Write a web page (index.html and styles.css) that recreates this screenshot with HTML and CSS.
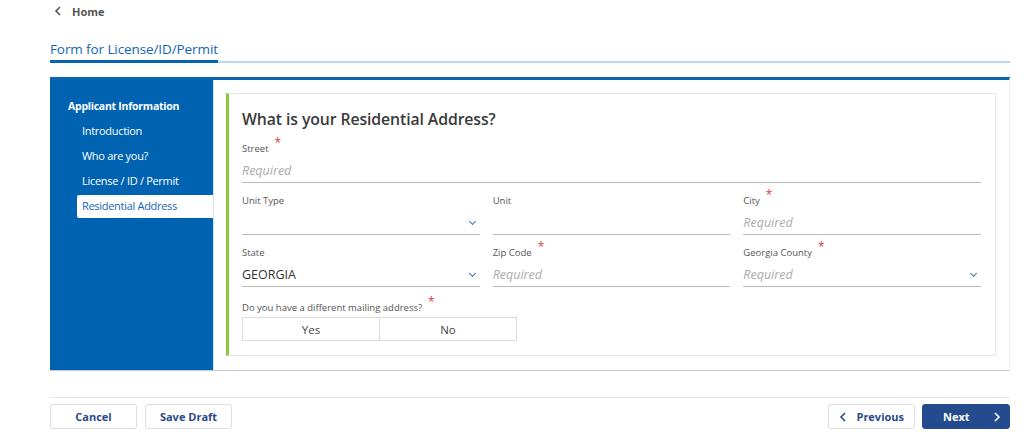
FILE: index.html
```html
<!DOCTYPE html>
<html lang="en">
<head>
    <meta charset="UTF-8">
    <meta name="viewport" content="width=device-width, initial-scale=1.0">
    <title>Form for License/ID/Permit</title>
    <link rel="stylesheet" href="styles.css">
</head>
<body>
    <div class="topbar">
        <svg class="back-icon" width="8" height="10" viewBox="0 0 8 10"><path d="M6 1 L2 5 L6 9" fill="none" stroke="#555" stroke-width="1.6"/></svg>
        <span class="home-link">Home</span>
    </div>

    <div class="page">
        <div class="title-row">
            <h1>Form for License/ID/Permit</h1>
            <div class="title-fill"></div>
        </div>

        <div class="panel">
            <nav class="sidebar">
                <div class="side-group">Applicant Information</div>
                <div class="side-item">Introduction</div>
                <div class="side-item">Who are you?</div>
                <div class="side-item">License / ID / Permit</div>
                <div class="side-item active">Residential Address</div>
            </nav>

            <div class="content">
                <div class="card">
                    <h2>What is your Residential Address?</h2>

                    <div class="field">
                        <label class="field-label required">Street</label>
                        <div class="field-input placeholder">Required</div>
                    </div>

                    <div class="field-row">
                        <div class="field">
                            <label class="field-label">Unit Type</label>
                            <div class="field-input select"></div>
                        </div>
                        <div class="field">
                            <label class="field-label">Unit</label>
                            <div class="field-input"></div>
                        </div>
                        <div class="field">
                            <label class="field-label required">City</label>
                            <div class="field-input placeholder">Required</div>
                        </div>
                    </div>

                    <div class="field-row">
                        <div class="field">
                            <label class="field-label">State</label>
                            <div class="field-input select">GEORGIA</div>
                        </div>
                        <div class="field">
                            <label class="field-label required">Zip Code</label>
                            <div class="field-input placeholder">Required</div>
                        </div>
                        <div class="field">
                            <label class="field-label required">Georgia County</label>
                            <div class="field-input select placeholder">Required</div>
                        </div>
                    </div>

                    <div class="question">
                        <label class="field-label required">Do you have a different mailing address?</label>
                        <div class="toggle">
                            <button class="toggle-btn">Yes</button>
                            <button class="toggle-btn">No</button>
                        </div>
                    </div>
                </div>
            </div>
        </div>

        <div class="footer">
            <div class="footer-left">
                <button class="btn">Cancel</button>
                <button class="btn">Save Draft</button>
            </div>
            <div class="footer-right">
                <button class="btn btn-prev">
                    <svg width="8" height="10" viewBox="0 0 8 10"><path d="M6 1 L2 5 L6 9" fill="none" stroke="#2a4a8a" stroke-width="1.6"/></svg>
                    <span>Previous</span>
                </button>
                <button class="btn btn-next">
                    <span>Next</span>
                    <svg width="8" height="10" viewBox="0 0 8 10"><path d="M2 1 L6 5 L2 9" fill="none" stroke="#fff" stroke-width="1.6"/></svg>
                </button>
            </div>
        </div>
    </div>
</body>
</html>
```

FILE: styles.css
```css
* {
    box-sizing: border-box;
    margin: 0;
    padding: 0;
}

body {
    font-family: "Open Sans", "Noto Sans", Arial, sans-serif;
    background-color: white;
    color: #444;
    width: 1024px;
}

.topbar {
    height: 22px;
    display: flex;
    align-items: center;
    padding-left: 54px;
    gap: 10px;
}

.home-link {
    font-size: 11px;
    font-weight: 700;
    color: #555;
}

.page {
    width: 960px;
    margin-left: 50px;
}

/* page title with split underline */
.title-row {
    display: flex;
    margin-top: 17px;
}

h1 {
    font-size: 13.5px;
    font-weight: 400;
    color: #1565b5;
    line-height: 20px;
    padding-bottom: 1px;
    border-bottom: 3px solid #0a64b4;
    width: 168px;
    white-space: nowrap;
    letter-spacing: -0.1px;
}

.title-fill {
    flex: 1;
    border-bottom: 2px solid #b8d8f6;
    margin-bottom: 0.5px;
}

.panel {
    display: flex;
    margin-top: 14px;
    border-top: 3px solid #0a64b4;
    border-bottom: 1px solid #c8c8c8;
    border-right: 1px solid #eee;
    height: 294px;
}

.sidebar {
    width: 164px;
    background-color: #0063b1;
    border-right: 1px solid #cfe3f5;
    padding-top: 18px;
    color: white;
}

.side-group {
    font-size: 10.5px;
    font-weight: 700;
    letter-spacing: -0.25px;
    padding-left: 18px;
    line-height: 16px;
    margin-bottom: 9px;
}

.side-item {
    font-size: 11px;
    letter-spacing: -0.3px;
    line-height: 16px;
    padding: 0 0 0 32px;
    margin-bottom: 9px;
}

.side-item.active {
    background-color: white;
    color: #1565b5;
    margin-left: 27px;
    padding: 3px 0 4px 5px;
    border-radius: 2px 0 0 2px;
    margin-top: -3px;
}

.content {
    flex: 1;
    padding: 13px 13px 14px 12px;
}

.card {
    height: 263px;
    border: 1px solid #e6e6e6;
    border-left: 3px solid #8dc63f;
    padding: 13px 14px 0 13px;
}

h2 {
    font-size: 15.8px;
    font-weight: 600;
    color: #3a3a3a;
    line-height: 24px;
    margin-bottom: 11px;
    letter-spacing: -0.1px;
}

.field-row {
    display: grid;
    grid-template-columns: repeat(3, 1fr);
    column-gap: 13px;
    margin-top: 11px;
}

.field-label {
    display: block;
    height: 14px;
    font-size: 9.5px;
    line-height: 14px;
    color: #555;
    white-space: nowrap;
}

.field-label.required::after {
    content: "*";
    color: #d9403a;
    font-size: 12px;
    line-height: 0;
    position: relative;
    top: -5px;
    left: 6px;
}

.field-input {
    height: 27px;
    border-bottom: 1px solid #b9b9b9;
    padding-top: 2px;
    font-size: 12.5px;
    line-height: 26px;
    color: #333;
    position: relative;
}

.field-input.placeholder {
    color: #aaa;
    font-style: italic;
}

.field-input.select::after {
    content: "";
    position: absolute;
    right: 5px;
    top: 11px;
    width: 4px;
    height: 4px;
    border-right: 1.2px solid #4a6fb0;
    border-bottom: 1.2px solid #4a6fb0;
    transform: rotate(45deg);
}

.question {
    margin-top: 14px;
}

.toggle {
    display: flex;
    margin-top: 2px;
}

.toggle-btn {
    width: 138px;
    height: 24px;
    background-color: white;
    border: 1px solid #dcdcdc;
    font-family: inherit;
    font-size: 11.5px;
    color: #444;
}

.toggle-btn + .toggle-btn {
    width: 137px;
    border-left: none;
}

.footer {
    display: flex;
    justify-content: space-between;
    margin-top: 26px;
    border-top: 1px solid #e6e6e6;
    padding-top: 6px;
}

.footer-left,
.footer-right {
    display: flex;
    gap: 8px;
}

.footer-right {
    gap: 7px;
}

.btn {
    width: 87px;
    height: 25px;
    background-color: white;
    border: 1px solid #ddd;
    border-radius: 3px;
    font-family: inherit;
    font-size: 11px;
    font-weight: 700;
    color: #2a4a8a;
    display: flex;
    align-items: center;
    justify-content: center;
}

.btn-prev {
    justify-content: space-between;
    padding: 0 10px 0 10px;
}

.btn-next {
    width: 88px;
    background-color: #234b8d;
    border-color: #234b8d;
    color: white;
    justify-content: space-between;
    padding: 0 8px 0 20px;
}
```
